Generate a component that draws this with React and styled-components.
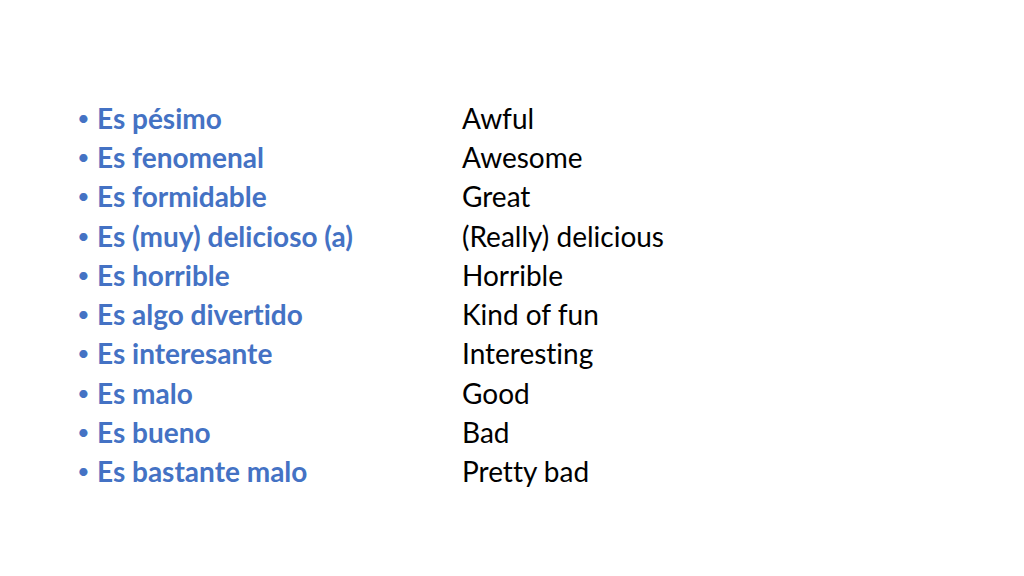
import React from 'react';
import styled, { createGlobalStyle } from 'styled-components';

const GlobalStyle = createGlobalStyle`
    html, body {
        margin: 0;
        padding: 0;
        background: #ffffff;
    }
`

const Slide = styled.div`
    width: 1024px;
    height: 576px;
    box-sizing: border-box;
    padding: 98px 0 0 77px;
    background: #ffffff;
    font-family: Lato, "Open Sans", sans-serif;
    font-variant-ligatures: none;
`

const List = styled.ul`
    list-style: none;
    margin: 0;
    padding: 0;
`

const Row = styled.li`
    display: grid;
    grid-template-columns: 20px 365px auto;
    height: 39.3px;
    align-items: center;
    font-size: 28px;
`

const Bullet = styled.span`
    color: #4472c4;
    font-size: 22px;
    line-height: 1;
`

const Term = styled.span`
    color: #4472c4;
    font-weight: 700;
    white-space: nowrap;
`

const Meaning = styled.span`
    color: #000000;
    white-space: nowrap;
`

const words = [
    ['Es pésimo', 'Awful'],
    ['Es fenomenal', 'Awesome'],
    ['Es formidable', 'Great'],
    ['Es (muy) delicioso (a)', '(Really) delicious'],
    ['Es horrible', 'Horrible'],
    ['Es algo divertido', 'Kind of fun'],
    ['Es interesante', 'Interesting'],
    ['Es malo', 'Good'],
    ['Es bueno', 'Bad'],
    ['Es bastante malo', 'Pretty bad'],
]

const App = () => {
    return (
        <>
            <GlobalStyle />
            <Slide>
                <List>
                    {words.map(([es, en]) => (
                        <Row key={es}>
                            <Bullet>•</Bullet>
                            <Term>{es}</Term>
                            <Meaning>{en}</Meaning>
                        </Row>
                    ))}
                </List>
            </Slide>
        </>
    )
}

export default App
